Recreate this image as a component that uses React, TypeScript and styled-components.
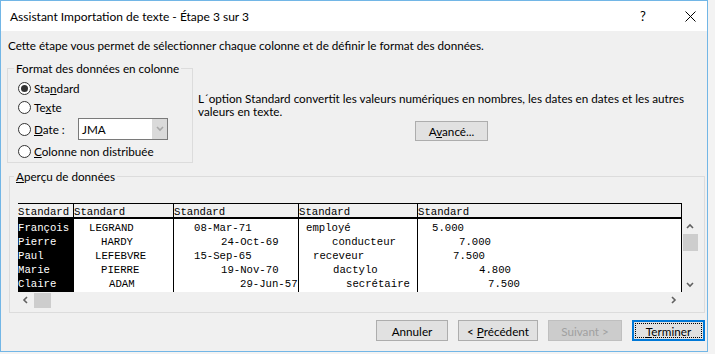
import styled, { createGlobalStyle } from "styled-components";

const GlobalStyle = createGlobalStyle`
  body {
    margin: 0;
    background: #f3f3f3;
    font-family: Lato, "Noto Sans", sans-serif;
    font-size: 11.7px;
    color: #000;
  }
`;

const Window = styled.div`
  width: 708px;
  height: 352px;
  box-sizing: border-box;
  border: 1px solid #72b6e6;
  background: #f0f0f0;
  display: flex;
  flex-direction: column;
`;

const TitleBar = styled.div`
  height: 30px;
  background: #fff;
  display: flex;
  align-items: center;
  padding-left: 9px;
  font-size: 12px;
`;

const TitleText = styled.div`
  flex: 1;
`;

const TitleButton = styled.div<{ $gap?: number }>`
  width: 34px;
  height: 30px;
  display: flex;
  align-items: center;
  justify-content: center;
  margin-right: ${(p) => p.$gap || 0}px;
  font-size: 13px;
`;

const Body = styled.div`
  flex: 1;
  display: flex;
  flex-direction: column;
  padding: 6px 2px 0 6px;
`;

const Intro = styled.div`
  line-height: 16px;
  margin-left: 1px;
  white-space: nowrap;
`;

const TopRow = styled.div`
  display: flex;
  margin-top: 8px;
`;

const Group = styled.fieldset<{ $width: number; $indent: number }>`
  margin: 0;
  padding: 0;
  width: ${(p) => p.$width}px;
  box-sizing: border-box;
  border: 1px solid #dcdcdc;
  min-width: 0;
  legend {
    padding: 0 2px;
    margin-left: ${(p) => p.$indent}px;
    line-height: 14px;
  }
`;

const FormatList = styled.div`
  display: flex;
  flex-direction: column;
  gap: 3px;
  padding: 5px 0 3px 10px;
`;

const RadioRow = styled.label<{ $tall?: boolean }>`
  display: flex;
  align-items: center;
  height: ${(p) => (p.$tall ? 22 : 16)}px;
  white-space: nowrap;
`;

const Radio = styled.span<{ $on?: boolean }>`
  width: 13px;
  height: 13px;
  box-sizing: border-box;
  border: 1px solid #333;
  border-radius: 50%;
  background: #fff;
  margin-right: 3px;
  display: flex;
  align-items: center;
  justify-content: center;
  &::after {
    content: "";
    width: 7px;
    height: 7px;
    border-radius: 50%;
    background: #333;
    display: ${(p) => (p.$on ? "block" : "none")};
  }
`;

const DateLabel = styled.span`
  width: 44px;
`;

const Combo = styled.div`
  width: 90px;
  height: 22px;
  box-sizing: border-box;
  border: 1px solid #7a7a7a;
  background: #fff;
  display: flex;
  align-items: center;
`;

const ComboText = styled.span`
  flex: 1;
  padding-left: 3px;
`;

const ComboArrow = styled.span`
  width: 15px;
  height: 100%;
  background: #dadada;
  display: flex;
  align-items: center;
  justify-content: center;
`;

const Description = styled.div`
  flex: 1;
  display: flex;
  flex-direction: column;
  padding: 31px 0 0 5px;
  line-height: 13px;
`;

const Key = styled.span`
  text-decoration: underline;
`;

const Button = styled.div<{ $width: number; $variant?: "default" | "disabled" }>`
  width: ${(p) => p.$width}px;
  height: 21px;
  box-sizing: border-box;
  display: flex;
  align-items: center;
  justify-content: center;
  background: ${(p) => (p.$variant === "disabled" ? "#cccccc" : "#e1e1e1")};
  color: ${(p) => (p.$variant === "disabled" ? "#a0a0a0" : "#000")};
  border: ${(p) =>
    p.$variant === "default"
      ? "2px solid #0078d7"
      : p.$variant === "disabled"
      ? "1px solid #bfbfbf"
      : "1px solid #adadad"};
  outline: ${(p) => (p.$variant === "default" ? "1px dotted #000" : "none")};
  outline-offset: -4px;
  white-space: pre;
`;

const AdvancedButton = styled(Button)`
  align-self: center;
  margin-top: 3px;
  height: 20px;
`;

const PreviewGroup = styled(Group)`
  margin: 6px 0 0 2px;
`;

const PreviewArea = styled.div`
  display: grid;
  grid-template-columns: 664px 16px;
  grid-template-rows: auto 16px;
  padding: 20px 5px 4px 8px;
`;

const Table = styled.div`
  display: flex;
  border-right: 1px solid #000;
  font-family: "Liberation Mono", monospace;
  font-size: 10.67px;
`;

const Column = styled.div<{ $width?: number; $first?: boolean }>`
  ${(p) => (p.$width ? `width: ${p.$width}px;` : "flex: 1;")}
  flex-shrink: 0;
  box-sizing: border-box;
  border-left: ${(p) => (p.$first ? "none" : "1px solid #000")};
  display: flex;
  flex-direction: column;
  overflow: hidden;
`;

const HeadCell = styled.div`
  height: 13px;
  line-height: 17px;
  border-top: 1px solid #000;
  border-bottom: 2px solid #000;
  white-space: pre;
`;

const ColumnBody = styled.div<{ $sel?: boolean }>`
  height: 73px;
  box-sizing: border-box;
  padding-top: 2px;
  background: ${(p) => (p.$sel ? "#000" : "#fff")};
  color: ${(p) => (p.$sel ? "#fff" : "#000")};
`;

const DataCell = styled.div<{ $indent: number }>`
  height: 14px;
  line-height: 14px;
  padding-left: ${(p) => p.$indent}px;
  white-space: pre;
`;

const VScroll = styled.div`
  margin-top: 16px;
  height: 73px;
  display: flex;
  flex-direction: column;
  align-items: center;
`;

const ScrollArrow = styled.div<{ $size: number }>`
  width: ${(p) => p.$size}px;
  height: ${(p) => p.$size}px;
  display: flex;
  align-items: center;
  justify-content: center;
`;

const VThumb = styled.div`
  width: 15px;
  height: 17px;
  background: #cdcdcd;
  margin-left: 1px;
`;

const HScroll = styled.div`
  display: flex;
  align-items: center;
`;

const HThumb = styled.div`
  width: 17px;
  height: 15px;
  background: #cdcdcd;
`;

const Spacer = styled.div`
  flex: 1;
`;

const ButtonRow = styled.div`
  display: flex;
  justify-content: flex-end;
  gap: 10px;
  margin-top: 7px;
`;

const Chevron = ({ dir, color = "#606060" }: { dir: "up" | "down" | "left" | "right"; color?: string }) => {
  const pts = {
    up: "1,5 4,2 7,5",
    down: "1,2 4,5 7,2",
    left: "5,1 2,4 5,7",
    right: "2,1 5,4 2,7",
  }[dir];
  return (
    <svg width="8" height="8" viewBox="0 0 8 8">
      <polyline points={pts} fill="none" stroke={color} strokeWidth="1.6" />
    </svg>
  );
};

const columns = [
  { width: 55, sel: true, cells: [["François", 0], ["Pierre", 0], ["Paul", 0], ["Marie", 0], ["Claire", 0]] },
  { width: 100, cells: [["LEGRAND", 15], ["HARDY", 27], ["LEFEBVRE", 21], ["PIERRE", 27], ["ADAM", 35]] },
  { width: 125, cells: [["08-Mar-71", 20], ["24-Oct-69", 47], ["15-Sep-65", 20], ["19-Nov-70", 47], ["29-Jun-57", 66]] },
  { width: 119, cells: [["employé", 7], ["conducteur", 33], ["receveur", 14], ["dactylo", 34], ["secrétaire", 47]] },
  { width: 0, cells: [["5.000", 14], ["7.000", 41], ["7.500", 35], ["4.800", 61], ["7.500", 70]] },
] as { width: number; sel?: boolean; cells: [string, number][] }[];

export default function App() {
  return (
    <>
      <GlobalStyle />
      <Window>
        <TitleBar>
          <TitleText>Assistant Importation de texte - Étape 3 sur 3</TitleText>
          <TitleButton $gap={13}>?</TitleButton>
          <TitleButton>
            <svg width="11" height="11" viewBox="0 0 11 11">
              <path d="M0.5 0.5 L10.5 10.5 M10.5 0.5 L0.5 10.5" stroke="#000" strokeWidth="1" />
            </svg>
          </TitleButton>
        </TitleBar>
        <Body>
          <Intro>Cette étape vous permet de sélectionner chaque colonne et de définir le format des données.</Intro>
          <TopRow>
            <Group $width={186} $indent={6}>
              <legend>Format des données en colonne</legend>
              <FormatList>
                <RadioRow>
                  <Radio $on />
                  <span>
                    Sta<Key>n</Key>dard
                  </span>
                </RadioRow>
                <RadioRow>
                  <Radio />
                  <span>
                    Te<Key>x</Key>te
                  </span>
                </RadioRow>
                <RadioRow $tall>
                  <Radio />
                  <DateLabel>
                    <Key>D</Key>ate :
                  </DateLabel>
                  <Combo>
                    <ComboText>JMA</ComboText>
                    <ComboArrow>
                      <Chevron dir="down" color="#a8a8a8" />
                    </ComboArrow>
                  </Combo>
                </RadioRow>
                <RadioRow>
                  <Radio />
                  <span>
                    <Key>C</Key>olonne non distribuée
                  </span>
                </RadioRow>
              </FormatList>
            </Group>
            <Description>
              <span>
                L´option Standard convertit les valeurs numériques en nombres, les dates en dates et les autres
                <br />
                valeurs en texte.
              </span>
              <AdvancedButton $width={73}>
                <span>
                  A<Key>v</Key>ancé...
                </span>
              </AdvancedButton>
            </Description>
          </TopRow>
          <PreviewGroup $width={696} $indent={4}>
            <legend>
              <Key>A</Key>perçu de données
            </legend>
            <PreviewArea>
              <Table>
                {columns.map((col, i) => (
                  <Column key={i} $width={col.width || undefined} $first={i === 0}>
                    <HeadCell>Standard</HeadCell>
                    <ColumnBody $sel={col.sel}>
                      {col.cells.map(([text, indent], j) => (
                        <DataCell key={j} $indent={indent}>
                          {text}
                        </DataCell>
                      ))}
                    </ColumnBody>
                  </Column>
                ))}
              </Table>
              <VScroll>
                <ScrollArrow $size={15}>
                  <Chevron dir="up" />
                </ScrollArrow>
                <VThumb />
                <Spacer />
                <ScrollArrow $size={15}>
                  <Chevron dir="down" />
                </ScrollArrow>
              </VScroll>
              <HScroll>
                <ScrollArrow $size={16}>
                  <Chevron dir="left" />
                </ScrollArrow>
                <HThumb />
                <Spacer />
                <ScrollArrow $size={16}>
                  <Chevron dir="right" />
                </ScrollArrow>
              </HScroll>
            </PreviewArea>
          </PreviewGroup>
          <ButtonRow>
            <Button $width={72}>Annuler</Button>
            <Button $width={80}>
              <span>
                &lt; <Key>P</Key>récédent
              </span>
            </Button>
            <Button $width={74} $variant="disabled">
              Suivant &gt;
            </Button>
            <Button $width={73} $variant="default">
              <span>
                <Key>T</Key>erminer
              </span>
            </Button>
          </ButtonRow>
        </Body>
      </Window>
    </>
  );
}
